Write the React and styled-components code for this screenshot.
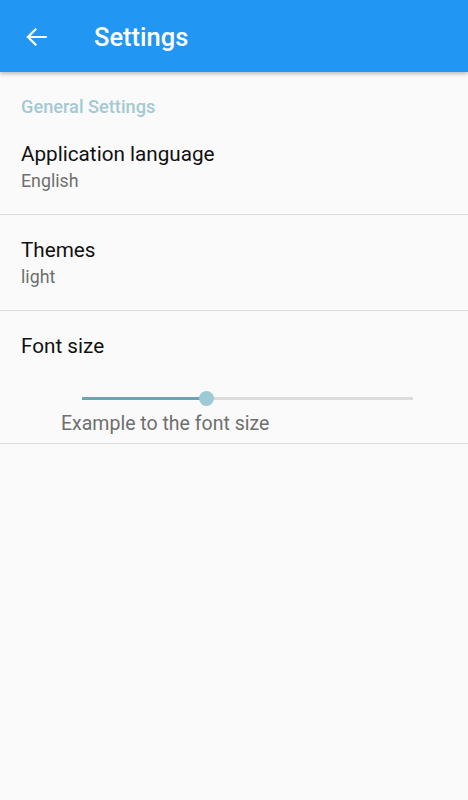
import React from 'react';
import styled, { createGlobalStyle } from 'styled-components';

const GlobalStyle = createGlobalStyle`
  html, body {
    margin: 0;
    padding: 0;
    background: #fafafa;
  }
  body {
    font-family: Roboto, 'Noto Sans', sans-serif;
  }
`;

const Screen = styled.div`
  width: 468px;
  min-height: 800px;
  background: #fafafa;
`;

const AppBar = styled.header`
  height: 72px;
  background: #2196f3;
  display: flex;
  align-items: center;
  box-shadow: 0 2px 4px rgba(0, 0, 0, 0.25);
  position: relative;
  z-index: 1;
`;

const BackButton = styled.button`
  width: 26px;
  height: 26px;
  margin: 2px 0 0 23px;
  padding: 0;
  border: none;
  background: none;
  display: flex;
  align-items: center;
  justify-content: center;
`;

const Title = styled.h1`
  margin: 2px 0 0 45px;
  font-size: 25.5px;
  font-weight: 500;
  color: #ffffff;
`;

const SectionHeader = styled.div`
  padding: 25px 21px 2px;
  font-size: 18.2px;
  line-height: 20px;
  font-weight: 500;
  color: #a3c9d3;
`;

const Item = styled.div`
  padding: 22px 21px ${(p) => (p.$tight ? '7px' : '21px')};
  border-bottom: 1px solid #dcdcdc;
`;

const ItemTitle = styled.div`
  font-size: 20.7px;
  line-height: 26px;
  color: #111111;
`;

const ItemSub = styled.div`
  margin-top: 2px;
  font-size: 17.8px;
  line-height: 24px;
  color: #6f6f6f;
`;

const SliderWrap = styled.div`
  margin: 29px 34px 0 61px;
  height: 20px;
  display: flex;
  align-items: center;
`;

const Track = styled.div`
  position: relative;
  flex: 1;
  height: 3px;
  background: #dcdcdc;
`;

const Fill = styled.div`
  position: absolute;
  left: 0;
  top: 0;
  bottom: 0;
  background: #6fa3b3;
`;

const Thumb = styled.div`
  position: absolute;
  top: 50%;
  width: 15px;
  height: 15px;
  margin-left: -7.5px;
  margin-top: -7.5px;
  border-radius: 50%;
  background: #9ccad6;
`;

const Example = styled.div`
  margin: 4px 0 0 40px;
  font-size: 19.5px;
  line-height: 24px;
  color: #6f6f6f;
`;

const BackArrow = () => (
  <svg width="26" height="26" viewBox="0 0 24 24" fill="none">
    <path
      d="M21 12H4.5M11.5 5l-7 7 7 7"
      stroke="#fff"
      strokeWidth="2"
      strokeLinecap="square"
    />
  </svg>
);

const App = () => {
  const value = 37.6;
  return (
    <>
      <GlobalStyle />
      <Screen>
        <AppBar>
          <BackButton aria-label="Back">
            <BackArrow />
          </BackButton>
          <Title>Settings</Title>
        </AppBar>

        <SectionHeader>General Settings</SectionHeader>

        <Item>
          <ItemTitle>Application language</ItemTitle>
          <ItemSub>English</ItemSub>
        </Item>

        <Item>
          <ItemTitle>Themes</ItemTitle>
          <ItemSub>light</ItemSub>
        </Item>

        <Item $tight>
          <ItemTitle>Font size</ItemTitle>
          <SliderWrap>
            <Track>
              <Fill style={{ width: `${value}%` }} />
              <Thumb style={{ left: `${value}%` }} />
            </Track>
          </SliderWrap>
          <Example>Example to the font size</Example>
        </Item>
      </Screen>
    </>
  );
};

export default App;
